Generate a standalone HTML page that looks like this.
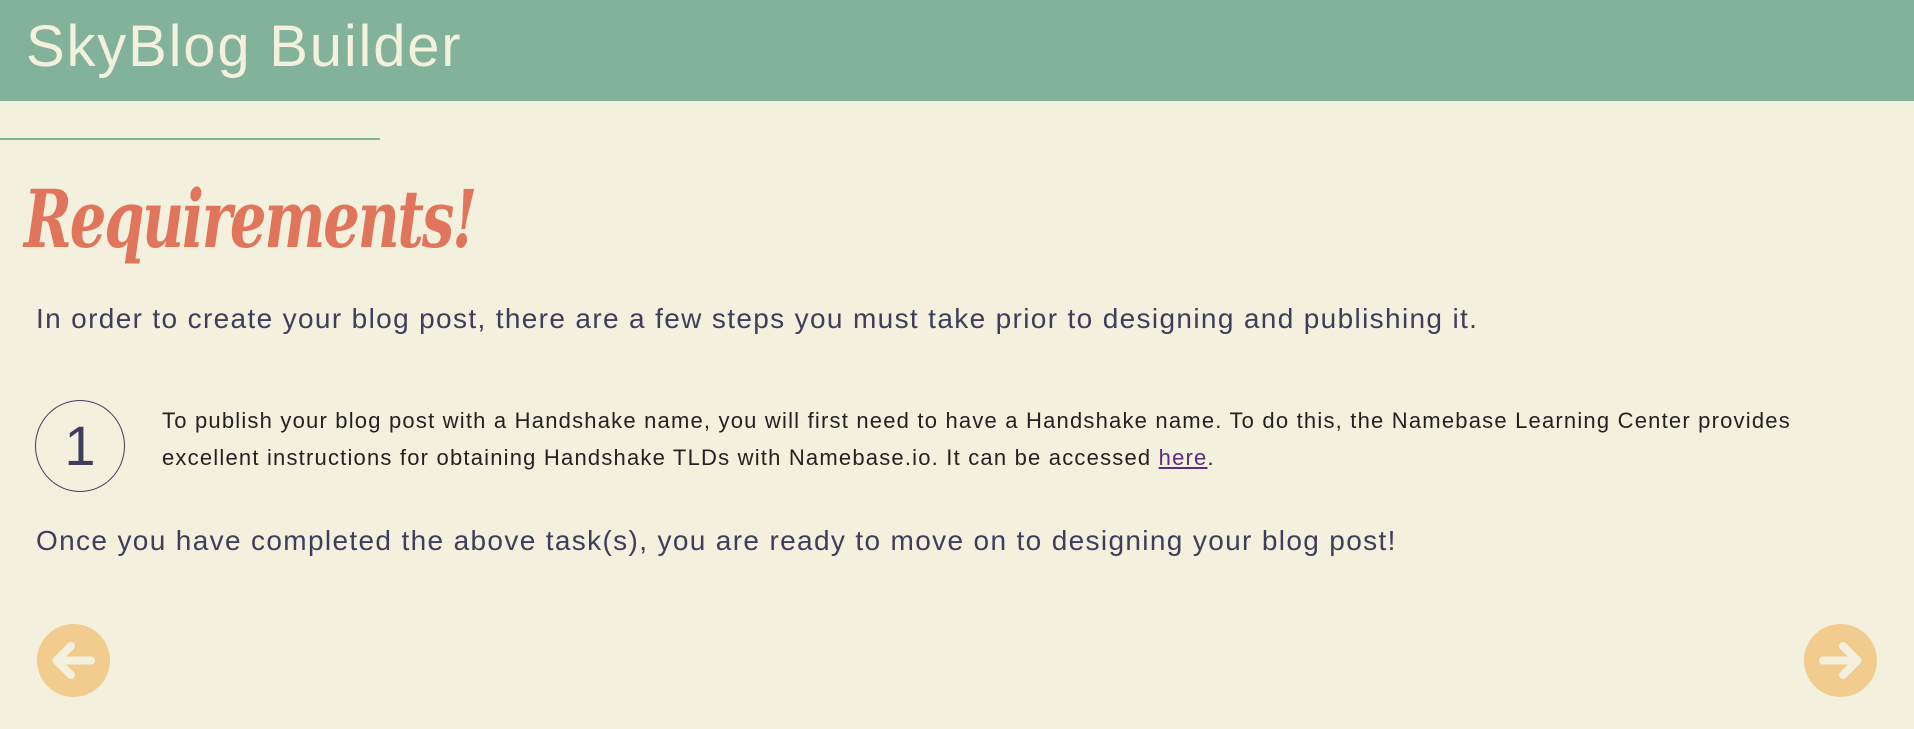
<!DOCTYPE html>
<html><head><meta charset="utf-8"><style>
body{margin:0;width:1914px;height:729px;background:#f3f0de;font-family:"Liberation Sans",sans-serif;overflow:hidden;position:relative}
.hdr{position:absolute;left:0;top:0;width:1914px;height:101px;background:#82b29a}
.hdr h1{margin:0;position:absolute;left:26px;top:13px;font-weight:normal;font-size:58px;color:#f3f0de;letter-spacing:1.8px}
.line{position:absolute;left:0;top:138px;width:380px;height:2px;background:#82b29a}
.req{position:absolute;left:24px;top:172px;font-family:"DejaVu Serif",serif;font-style:italic;font-weight:bold;font-size:80px;color:#e0755c;letter-spacing:-3px;transform:scaleX(0.72);transform-origin:left top}
.p{position:absolute;left:36px;font-size:28px;letter-spacing:1.35px;color:#3d3d5c;white-space:nowrap}
.circ{position:absolute;left:35px;top:400px;width:88px;height:90px;border:1px solid #3d3d5c;border-radius:50%;text-align:center;line-height:90px;font-size:56px;color:#3d3d5c}
.step{position:absolute;left:162px;top:402px;font-size:22px;letter-spacing:1.2px;line-height:37px;color:#222;white-space:nowrap}
.step a{color:#5a2d82}
.btn{position:absolute;top:624px;width:73px;height:73px;border-radius:50%;background:#f2cb8f}
</style></head><body>
<div class="hdr"><h1>SkyBlog Builder</h1></div>
<div class="line"></div>
<div class="req">Requirements!</div>
<div class="p" style="top:303px">In order to create your blog post, there are a few steps you must take prior to designing and publishing it.</div>
<div class="circ">1</div>
<div class="step">To publish your blog post with a Handshake name, you will first need to have a Handshake name. To do this, the Namebase Learning Center provides<br>excellent instructions for obtaining Handshake TLDs with Namebase.io. It can be accessed <a href="#">here</a>.</div>
<div class="p" style="top:525px">Once you have completed the above task(s), you are ready to move on to designing your blog post!</div>
<div class="btn" style="left:37px"><svg width="73" height="73" viewBox="0 0 73 73"><path d="M54 36.5H20M34 22L19.5 36.5L34 51" stroke="#f3f0de" stroke-width="8" fill="none" stroke-linecap="round" stroke-linejoin="round"/></svg></div>
<div class="btn" style="left:1804px"><svg width="73" height="73" viewBox="0 0 73 73"><path d="M19 36.5H53M39 22L53.5 36.5L39 51" stroke="#f3f0de" stroke-width="8" fill="none" stroke-linecap="round" stroke-linejoin="round"/></svg></div>
</body></html>
